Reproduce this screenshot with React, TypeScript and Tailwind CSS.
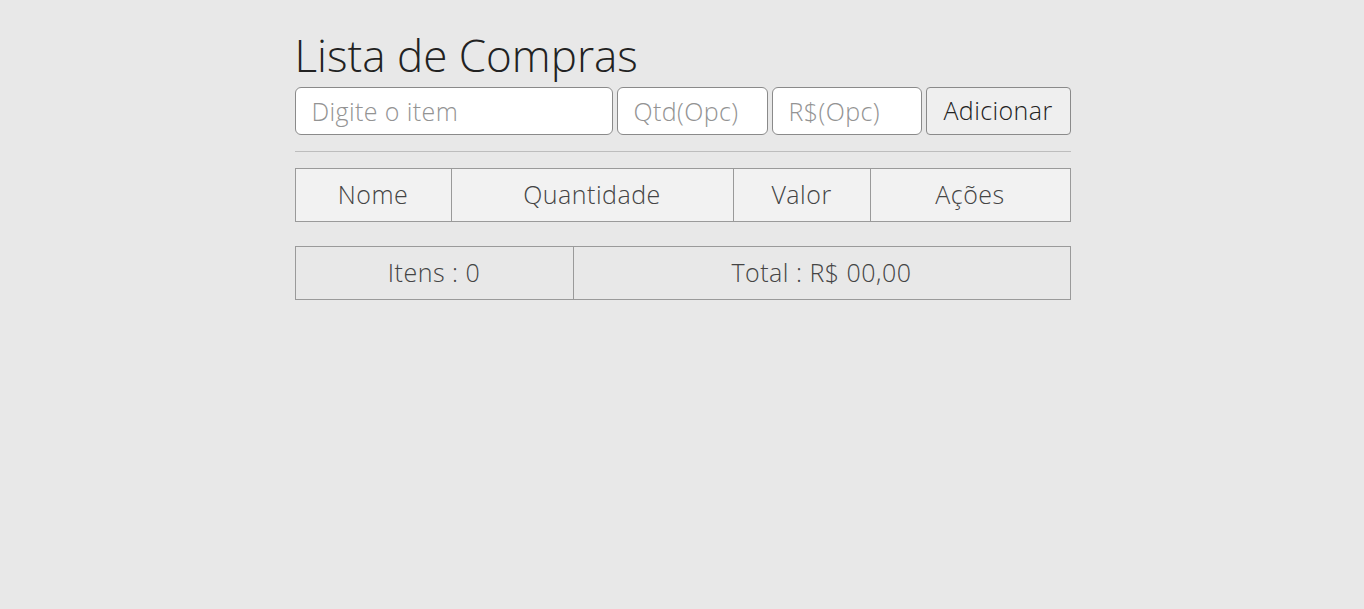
import React, { useState } from 'react';

const font = { fontFamily: '"Open Sans", "Liberation Sans", sans-serif' };

export default function App() {
  const [item, setItem] = useState('');
  const [qtd, setQtd] = useState('');
  const [valor, setValor] = useState('');

  return (
    <div className="min-h-screen bg-[#e8e8e8] pl-px font-light" style={font}>
      <div className="mx-auto w-[776px] pt-[28px]">
        <h1 className="text-[44px] leading-[54px] font-light text-[#222]">Lista de Compras</h1>

        <div className="mt-[5px] flex gap-[4px]">
          <input
            value={item}
            onChange={(e) => setItem(e.target.value)}
            placeholder="Digite o item"
            className="h-[48px] w-[318px] rounded-[6px] border border-[#8a8a8a] bg-white px-[16px] text-[25px] tracking-[0.4px] font-light text-[#333] placeholder:text-[#939393] outline-none"
          />
          <input
            value={qtd}
            onChange={(e) => setQtd(e.target.value)}
            placeholder="Qtd(Opc)"
            className="h-[48px] w-[151px] rounded-[6px] border border-[#8a8a8a] bg-white px-[16px] text-[25px] tracking-[0.4px] font-light text-[#333] placeholder:text-[#939393] outline-none"
          />
          <input
            value={valor}
            onChange={(e) => setValor(e.target.value)}
            placeholder="R$(Opc)"
            className="h-[48px] w-[150px] rounded-[6px] border border-[#8a8a8a] bg-white px-[16px] text-[25px] tracking-[0.4px] font-light text-[#333] placeholder:text-[#939393] outline-none"
          />
          <button className="h-[48px] flex-1 rounded-[4px] border border-[#8a8a8a] bg-[#efefef] text-[25px] tracking-[0.4px] font-light text-[#222]">
            Adicionar
          </button>
        </div>

        <hr className="mt-[16px] border-t border-[#bdbdbd]" />

        <table className="mt-[16px] w-full border-collapse text-[25px] tracking-[0.5px] font-light text-[#444]">
          <thead>
            <tr className="h-[53px] bg-[#f2f2f2]">
              <th className="w-[156px] border border-[#9a9a9a] font-light">Nome</th>
              <th className="w-[282px] border border-[#9a9a9a] font-light">Quantidade</th>
              <th className="w-[137px] border border-[#9a9a9a] font-light">Valor</th>
              <th className="border border-[#9a9a9a] font-light">Ações</th>
            </tr>
          </thead>
        </table>

        <table className="mt-[24px] w-full border-collapse text-[25px] tracking-[0.5px] font-light text-[#444]">
          <tbody>
            <tr className="h-[53px]">
              <td className="w-[278px] border border-[#9a9a9a] text-center">Itens : 0</td>
              <td className="border border-[#9a9a9a] text-center">Total : R$ 00,00</td>
            </tr>
          </tbody>
        </table>
      </div>
    </div>
  );
}
